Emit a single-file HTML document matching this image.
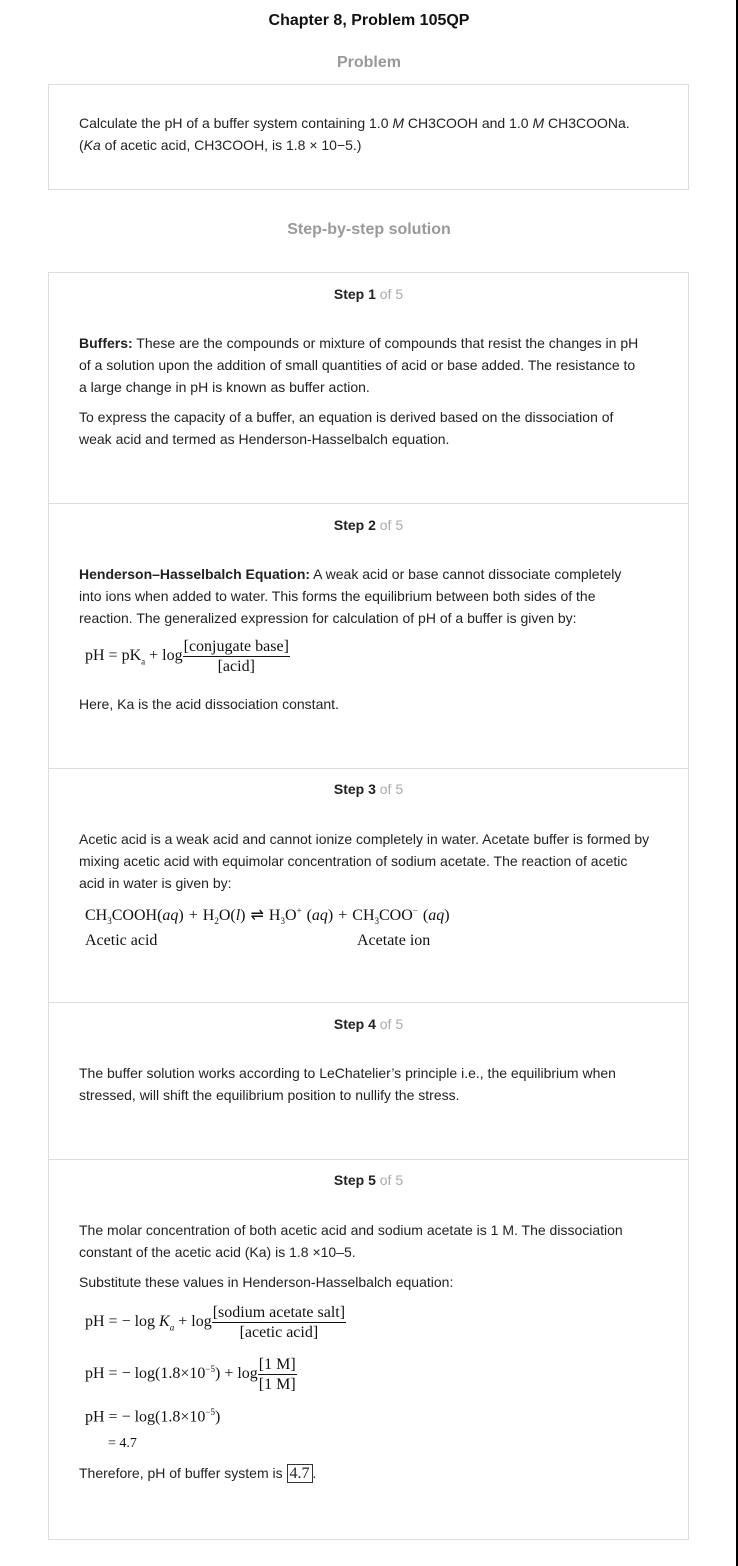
<!DOCTYPE html>
<html><head><meta charset="utf-8"><style>
body{margin:0;width:738px;height:1566px;position:relative;background:#fff;font-family:"Liberation Sans",Arial,sans-serif;font-size:14px;color:#222;overflow:hidden}
.a{position:absolute}
.box{position:absolute;left:48px;width:639px;border:1px solid #ddd}
.t{position:absolute;left:79px;width:600px;line-height:22px;white-space:nowrap}
.h{position:absolute;left:0;width:738px;text-align:center}
.s{position:absolute;left:48px;width:641px;text-align:center;font-weight:bold;font-size:14px}
.s span{color:#aaa;font-weight:normal}
.m{position:absolute;font-family:"Liberation Serif",serif;font-size:16px;white-space:nowrap;color:#111}
.fr{display:inline-block;vertical-align:middle;text-align:center;line-height:19px}
.fr .n{border-bottom:1px solid #111;padding:0 1px}
sub,sup{font-size:9px}
</style></head><body>
<div class="a" style="left:736px;top:0;width:2px;height:1566px;background:#000"></div>
<div class="h" style="top:12px;font-weight:bold;font-size:16px;color:#111">Chapter 8, Problem 105QP</div>
<div class="h" style="top:54px;font-weight:bold;font-size:16px;color:#999">Problem</div>
<div class="box" style="top:84px;height:104px"></div>
<div class="t" style="top:112px">Calculate the pH of a buffer system containing 1.0 <i>M</i> CH3COOH and 1.0 <i>M</i> CH3COONa.<br>(<i>Ka</i> of acetic acid, CH3COOH, is 1.8 × 10−5.)</div>
<div class="h" style="top:221px;font-weight:bold;font-size:16px;color:#999">Step-by-step solution</div>
<div class="box" style="top:272px;height:1266px"></div>
<div class="a" style="left:49px;width:639px;top:503px;height:1px;background:#ddd"></div>
<div class="a" style="left:49px;width:639px;top:768px;height:1px;background:#ddd"></div>
<div class="a" style="left:49px;width:639px;top:1002px;height:1px;background:#ddd"></div>
<div class="a" style="left:49px;width:639px;top:1159px;height:1px;background:#ddd"></div>

<div class="s" style="top:286px">Step 1 <span>of 5</span></div>
<div class="t" style="top:332px"><b>Buffers:</b> These are the compounds or mixture of compounds that resist the changes in pH<br>of a solution upon the addition of small quantities of acid or base added. The resistance to<br>a large change in pH is known as buffer action.</div>
<div class="t" style="top:406px">To express the capacity of a buffer, an equation is derived based on the dissociation of<br>weak acid and termed as Henderson-Hasselbalch equation.</div>

<div class="s" style="top:517px">Step 2 <span>of 5</span></div>
<div class="t" style="top:563px"><b>Henderson–Hasselbalch Equation:</b> A weak acid or base cannot dissociate completely<br>into ions when added to water. This forms the equilibrium between both sides of the<br>reaction. The generalized expression for calculation of pH of a buffer is given by:</div>
<div class="m" style="left:85px;top:637px">pH = pK<sub>a</sub> + log<span class="fr"><div class="n">[conjugate base]</div><div>[acid]</div></span></div>
<div class="t" style="top:693px">Here, Ka is the acid dissociation constant.</div>

<div class="s" style="top:781px">Step 3 <span>of 5</span></div>
<div class="t" style="top:828px">Acetic acid is a weak acid and cannot ionize completely in water. Acetate buffer is formed by<br>mixing acetic acid with equimolar concentration of sodium acetate. The reaction of acetic<br>acid in water is given by:</div>
<div class="m" style="left:85px;top:905px;word-spacing:1px">CH<sub>3</sub>COOH(<i>aq</i>) + H<sub>2</sub>O(<i>l</i>) ⇌ H<sub>3</sub>O<sup>+</sup> (<i>aq</i>) + CH<sub>3</sub>COO<sup>−</sup> (<i>aq</i>)</div>
<div class="m" style="left:85px;top:932px">Acetic acid</div>
<div class="m" style="left:357px;top:932px">Acetate ion</div>

<div class="s" style="top:1016px">Step 4 <span>of 5</span></div>
<div class="t" style="top:1062px">The buffer solution works according to LeChatelier’s principle i.e., the equilibrium when<br>stressed, will shift the equilibrium position to nullify the stress.</div>

<div class="s" style="top:1172px">Step 5 <span>of 5</span></div>
<div class="t" style="top:1219px">The molar concentration of both acetic acid and sodium acetate is 1 M. The dissociation<br>constant of the acetic acid (Ka) is 1.8 ×10–5.</div>
<div class="t" style="top:1271px">Substitute these values in Henderson-Hasselbalch equation:</div>
<div class="m" style="left:85px;top:1303px">pH = − log <i>K</i><sub><i>a</i></sub> + log<span class="fr"><div class="n">[sodium acetate salt]</div><div>[acetic acid]</div></span></div>
<div class="m" style="left:85px;top:1355px">pH = − log(1.8×10<sup>−5</sup>) + log<span class="fr"><div class="n">[1 M]</div><div>[1 M]</div></span></div>
<div class="m" style="left:85px;top:1407px">pH = − log(1.8×10<sup>−5</sup>)</div>
<div class="m" style="left:108px;top:1436px;font-size:14px">= 4.7</div>
<div class="t" style="top:1462px">Therefore, pH of buffer system is <span style="font-family:'Liberation Serif',serif;font-size:16px;border:1px solid #333;padding:0 2px">4.7</span>.</div>
</body></html>
